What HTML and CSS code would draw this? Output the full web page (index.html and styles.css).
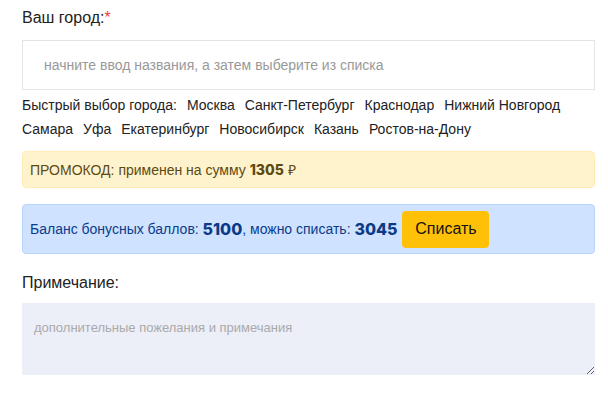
FILE: index.html
```html
<!DOCTYPE html>
<html lang="ru">
<head>
    <meta charset="UTF-8">
    <meta name="viewport" content="width=device-width, initial-scale=1.0">
    <title>Оформление заказа</title>
    <link rel="stylesheet" href="styles.css">
</head>
<body>
    <div class="order-form">
        <div class="field-label">Ваш город:<span class="required">*</span></div>
        <input class="city-input" type="text" placeholder="начните ввод названия, а затем выберите из списка">
        <div class="quick-cities">
            <span class="quick-title">Быстрый выбор города:</span>
            <a href="#">Москва</a>
            <a href="#">Санкт-Петербург</a>
            <a href="#">Краснодар</a>
            <a href="#">Нижний Новгород</a>
            <a href="#">Самара</a>
            <a href="#">Уфа</a>
            <a href="#">Екатеринбург</a>
            <a href="#">Новосибирск</a>
            <a href="#">Казань</a>
            <a href="#">Ростов-на-Дону</a>
        </div>

        <div class="alert alert-promo">
            ПРОМОКОД: применен на сумму&nbsp;<b class="num">1305</b>&nbsp;₽
        </div>

        <div class="alert alert-bonus">
            Баланс бонусных баллов:&nbsp;<b class="num big">5100</b>, можно списать:&nbsp;<b class="num big">3045</b>
            <button class="btn-spend">Списать</button>
        </div>

        <div class="field-label note-label">Примечание:</div>
        <textarea class="note" placeholder="дополнительные пожелания и примечания"></textarea>
    </div>
</body>
</html>
```

FILE: styles.css
```css
body {
    margin: 0;
    padding: 0;
    background: #fff;
    font-family: "Liberation Sans", Arial, sans-serif;
    color: #222;
}
.order-form {
    width: 573px;
    padding: 8px 0 0 22px;
}
.field-label {
    font-size: 16px;
    line-height: 20px;
    margin-bottom: 12px;
}
.required {
    color: #e8413a;
}
.city-input {
    display: block;
    box-sizing: border-box;
    width: 573px;
    height: 50px;
    border: 1px solid #e4e4e4;
    padding: 0 21px;
    font-family: "Liberation Sans", Arial, sans-serif;
    font-size: 14px;
    outline: none;
}
.city-input::placeholder {
    color: #999;
}
.quick-cities {
    margin-top: 3px;
    font-size: 14px;
    line-height: 24px;
    display: flex;
    flex-wrap: wrap;
    column-gap: 10px;
}
.quick-cities a {
    color: #222;
    text-decoration: none;
}
.alert {
    box-sizing: border-box;
    display: flex;
    align-items: center;
    border: 1px solid;
    border-radius: 4px;
    padding: 0 7px;
    font-size: 14px;
}
.alert-promo {
    margin-top: 10px;
    height: 37px;
    background: #fff3cd;
    border-color: #ffecb5;
    color: #5c4a12;
}
.alert-bonus {
    margin-top: 16px;
    height: 50px;
    background: #cfe2ff;
    border-color: #b6d4fe;
    color: #0a3c8c;
}
.num {
    font-family: Inter, "Open Sans", sans-serif;
    font-weight: 800;
    font-size: 14px;
}
.num.big {
    font-size: 16px;
    color: #0b3a86;
}
.btn-spend {
    margin-left: 5px;
    width: 87px;
    height: 37px;
    border: none;
    border-radius: 4px;
    background: #ffc107;
    color: #111;
    font-family: "Liberation Sans", Arial, sans-serif;
    font-size: 16px;
    cursor: pointer;
}
.note-label {
    margin-top: 19px;
    margin-bottom: 10px;
}
.note {
    display: block;
    box-sizing: border-box;
    width: 573px;
    height: 72px;
    border: none;
    background: #eceef8;
    padding: 17px 12px;
    font-family: "Liberation Sans", Arial, sans-serif;
    font-size: 13px;
    outline: none;
}
.note::placeholder {
    color: #aaa;
}
```
